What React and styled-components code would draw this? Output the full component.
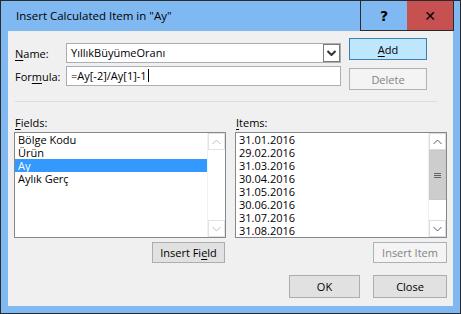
import React from "react";
import styled, { createGlobalStyle, css } from "styled-components";

const GlobalStyle = createGlobalStyle`
  html, body { margin: 0; padding: 0; background: #ffffff; }
  body {
    font-family: "Open Sans", "Noto Sans", sans-serif;
    font-size: 11px;
    color: #000;
  }
`;

const Frame = styled.div`
  width: 461px;
  height: 314px;
  box-sizing: border-box;
  border: 1px solid #2b2b2b;
  background: #80b9f2;
  display: flex;
  flex-direction: column;
`;

const TitleBar = styled.div`
  height: 30px;
  display: flex;
  align-items: flex-start;
  padding-right: 6px;
`;

const Title = styled.div`
  flex: 1;
  padding: 7px 0 0 15px;
  font-size: 11.5px;
  line-height: 15px;
`;

const Caption = styled.div`
  display: flex;
  height: 30px;
  box-sizing: border-box;
  border: 1px solid #2b2b2b;
  border-top: 0;
`;

const CaptionButton = styled.div`
  width: 46px;
  display: flex;
  align-items: center;
  justify-content: center;
  font-weight: bold;
  font-size: 14px;
  font-family: "DejaVu Sans", sans-serif;
  background: ${(p) => (p.close ? "#c75050" : "transparent")};
`;

const Content = styled.div`
  margin: 0 7px 7px 7px;
  flex: 1;
  background: #f0f0f0;
  padding: 7px 6px 0 6px;
  display: flex;
  flex-direction: column;
`;

const TopRow = styled.div`
  display: flex;
  align-items: flex-start;
`;

const FormGrid = styled.div`
  display: grid;
  grid-template-columns: 52px 275px;
  row-gap: 3px;
  margin-top: 5px;
  align-items: center;
`;

const Label = styled.span`
  padding-left: 1px;
  line-height: 15px;
`;

const Key = styled.span`
  text-decoration: underline;
  text-underline-offset: 2px;
`;

const InputBox = styled.div`
  height: 20px;
  box-sizing: border-box;
  border: 1px solid #abadb3;
  background: #fff;
  display: flex;
  align-items: center;
`;

const InputText = styled.span`
  flex: 1;
  padding-left: 4px;
  line-height: 18px;
  white-space: nowrap;
`;

const Caret = styled.span`
  display: inline-block;
  width: 1px;
  height: 13px;
  background: #000;
  vertical-align: -2px;
  margin-left: 1px;
`;

const DropBox = styled.div`
  width: 17px;
  height: 18px;
  box-sizing: border-box;
  border: 1px solid #7a7a7a;
  display: flex;
  align-items: center;
  justify-content: center;
`;

const ButtonCol = styled.div`
  display: flex;
  flex-direction: column;
  gap: 8px;
  margin-left: 8px;
`;

const variants = {
  default: css`
    background: #bee6fd;
    border-color: #3c7fb1;
    color: #000;
  `,
  normal: css`
    background: #e1e1e1;
    border-color: #adadad;
    color: #000;
  `,
  disabled: css`
    background: #f4f4f4;
    border-color: #adb2b5;
    color: #838383;
  `,
};

const Button = styled.div`
  width: ${(p) => p.w}px;
  height: ${(p) => p.h}px;
  box-sizing: border-box;
  border: 1px solid;
  display: flex;
  align-items: center;
  justify-content: center;
  font-size: 11px;
  ${(p) => variants[p.variant || "normal"]}
`;

const Divider = styled.div`
  height: 1px;
  background: #d6dde3;
  margin: 11px 10px 0 1px;
`;

const Panels = styled.div`
  display: flex;
  gap: 9px;
  margin-top: 13px;
`;

const Panel = styled.div`
  width: 212px;
  display: flex;
  flex-direction: column;
`;

const PanelLabel = styled.div`
  height: 15px;
  line-height: 15px;
  padding-left: 1px;
  margin-bottom: 2px;
`;

const ListBox = styled.div`
  height: 106px;
  box-sizing: border-box;
  border: 1px solid #828790;
  background: #fff;
  display: flex;
`;

const Rows = styled.div`
  flex: 1;
`;

const Row = styled.div`
  height: 13px;
  line-height: 13px;
  padding-left: 3px;
  white-space: nowrap;
  background: ${(p) => (p.selected ? "#3399ff" : "transparent")};
  color: ${(p) => (p.selected ? "#fff" : "#000")};
`;

const ScrollBar = styled.div`
  width: 17px;
  display: flex;
  flex-direction: column;
  background: #f0f0f0;
  border-left: 1px solid #f0f0f0;
`;

const ScrollArrow = styled.div`
  height: 17px;
  box-sizing: border-box;
  border: 1px solid ${(p) => (p.disabled ? "#e3e3e3" : "#dcdcdc")};
  background: #fff;
  display: flex;
  align-items: center;
  justify-content: center;
`;

const ScrollSpace = styled.div`
  flex: 1;
  background: #fff;
  display: flex;
  flex-direction: column;
`;

const Thumb = styled.div`
  height: ${(p) => p.h}px;
  box-sizing: border-box;
  background: #cdcdcd;
  border: 1px solid #c8c8c8;
  display: flex;
  align-items: center;
  justify-content: center;
`;

const ActionRow = styled.div`
  display: flex;
  justify-content: flex-end;
  margin-top: 4px;
  padding-right: ${(p) => p.pr || 0}px;
`;

const Footer = styled.div`
  display: flex;
  justify-content: flex-end;
  gap: 13px;
  margin-top: 12px;
`;

const Chevron = ({ up, color = "#606060", bold }) => (
  <svg width="9" height="6" viewBox="0 0 9 6">
    <path
      d={up ? "M0.5 5 L4.5 1 L8.5 5" : "M0.5 1 L4.5 5 L8.5 1"}
      fill="none"
      stroke={color}
      strokeWidth={bold ? 2 : 1}
    />
  </svg>
);

const Grip = () => (
  <svg width="7" height="7" viewBox="0 0 7 7">
    <path d="M0 1.5 H7 M0 3.5 H7 M0 5.5 H7" stroke="#606060" strokeWidth="1" />
  </svg>
);

const Scroll = ({ disabled, thumb }) => (
  <ScrollBar>
    <ScrollArrow disabled={disabled}>
      <Chevron up color={disabled ? "#bfbfbf" : "#606060"} />
    </ScrollArrow>
    <ScrollSpace>
      {thumb && (
        <Thumb h={thumb}>
          <Grip />
        </Thumb>
      )}
    </ScrollSpace>
    <ScrollArrow disabled={disabled}>
      <Chevron color={disabled ? "#bfbfbf" : "#606060"} />
    </ScrollArrow>
  </ScrollBar>
);

const fields = ["Bölge Kodu", "Ürün", "Ay", "Aylık Gerç"];
const items = [
  "31.01.2016",
  "29.02.2016",
  "31.03.2016",
  "30.04.2016",
  "31.05.2016",
  "30.06.2016",
  "31.07.2016",
  "31.08.2016",
];

export default function App() {
  return (
    <>
      <GlobalStyle />
      <Frame>
        <TitleBar>
          <Title>Insert Calculated Item in "Ay"</Title>
          <Caption>
            <CaptionButton>?</CaptionButton>
            <CaptionButton close>✕</CaptionButton>
          </Caption>
        </TitleBar>
        <Content>
          <TopRow>
            <FormGrid>
              <Label>
                <Key>N</Key>ame:
              </Label>
              <InputBox>
                <InputText>YıllıkBüyümeOranı</InputText>
                <DropBox>
                  <Chevron color="#333" bold />
                </DropBox>
              </InputBox>
              <Label>
                For<Key>m</Key>ula:
              </Label>
              <InputBox>
                <InputText>
                  =Ay[-2]/Ay[1]-1
                  <Caret />
                </InputText>
              </InputBox>
            </FormGrid>
            <ButtonCol>
              <Button w={78} h={22} variant="default">
                <span>
                  <Key>A</Key>dd
                </span>
              </Button>
              <Button w={78} h={22} variant="disabled">
                Delete
              </Button>
            </ButtonCol>
          </TopRow>
          <Divider />
          <Panels>
            <Panel>
              <PanelLabel>
                <Key>F</Key>ields:
              </PanelLabel>
              <ListBox>
                <Rows>
                  {fields.map((f) => (
                    <Row key={f} selected={f === "Ay"}>
                      {f}
                    </Row>
                  ))}
                </Rows>
                <Scroll disabled />
              </ListBox>
              <ActionRow pr={1}>
                <Button w={73} h={21}>
                  <span>
                    Insert Fi<Key>e</Key>ld
                  </span>
                </Button>
              </ActionRow>
            </Panel>
            <Panel>
              <PanelLabel>
                <Key>I</Key>tems:
              </PanelLabel>
              <ListBox>
                <Rows>
                  {items.map((i) => (
                    <Row key={i}>{i}</Row>
                  ))}
                </Rows>
                <Scroll thumb={50} />
              </ListBox>
              <ActionRow>
                <Button w={74} h={21} variant="disabled">
                  Insert Item
                </Button>
              </ActionRow>
            </Panel>
          </Panels>
          <Footer>
            <Button w={71} h={23}>
              OK
            </Button>
            <Button w={74} h={23}>
              Close
            </Button>
          </Footer>
        </Content>
      </Frame>
    </>
  );
}
